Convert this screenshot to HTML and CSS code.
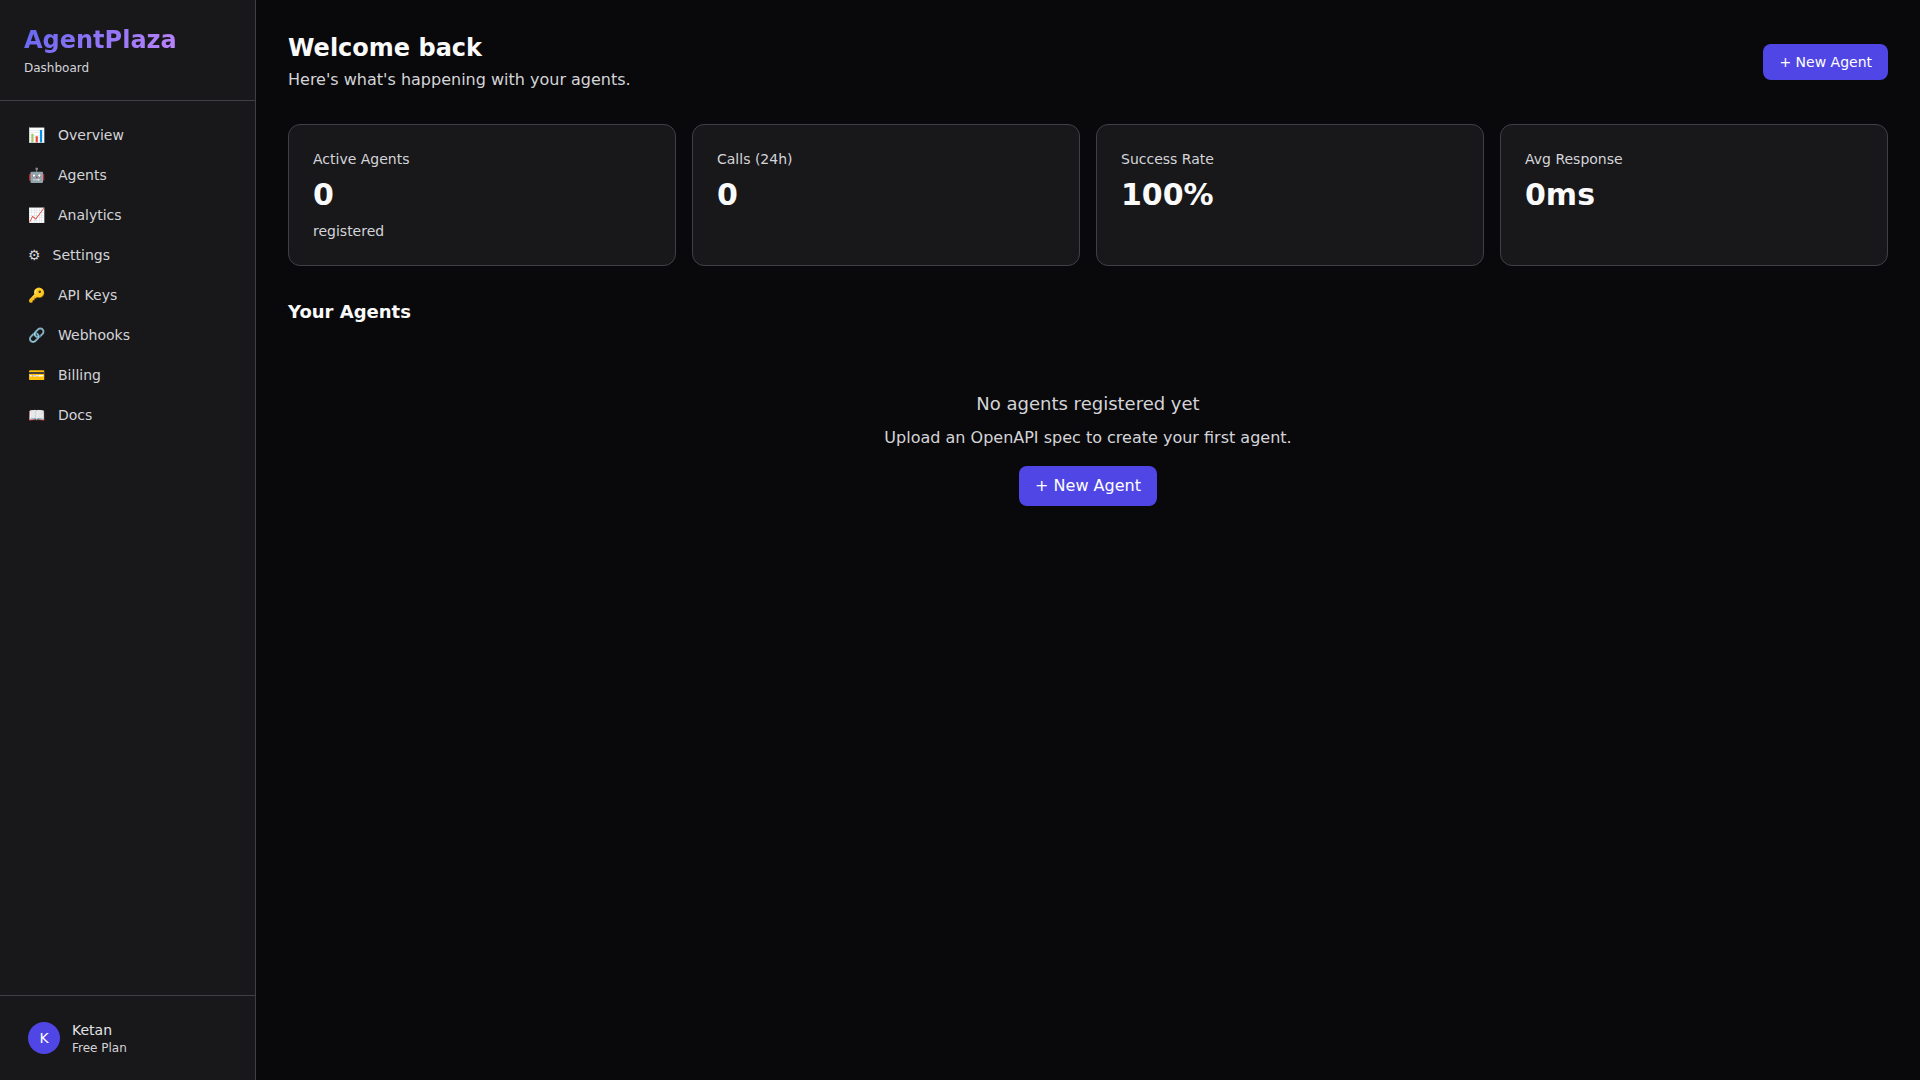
FILE: index.html
```html
<!DOCTYPE html>
<html lang="en">
<head>
    <meta charset="UTF-8">
    <title>AgentPlaza Dashboard</title>
    <link rel="stylesheet" href="styles.css">
</head>
<body>
    <div class="layout">
        <aside class="sidebar">
            <div class="brand">
                <div class="logo">AgentPlaza</div>
                <div class="brand-sub">Dashboard</div>
            </div>
            <nav class="nav">
                <a class="nav-link"><span>📊</span> <span>Overview</span></a>
                <a class="nav-link"><span>🤖</span> <span>Agents</span></a>
                <a class="nav-link"><span>📈</span> <span>Analytics</span></a>
                <a class="nav-link nav-link-glyph"><span>⚙</span> <span>Settings</span></a>
                <a class="nav-link"><span>🔑</span> <span>API Keys</span></a>
                <a class="nav-link"><span>🔗</span> <span>Webhooks</span></a>
                <a class="nav-link"><span>💳</span> <span>Billing</span></a>
                <a class="nav-link"><span>📖</span> <span>Docs</span></a>
            </nav>
            <div class="user">
                <div class="avatar">K</div>
                <div>
                    <div class="user-name">Ketan</div>
                    <div class="user-plan">Free Plan</div>
                </div>
            </div>
        </aside>

        <main class="main">
            <div class="page-header">
                <div>
                    <h1>Welcome back</h1>
                    <p>Here's what's happening with your agents.</p>
                </div>
                <button class="btn">+ New Agent</button>
            </div>

            <div class="stats">
                <div class="card">
                    <div class="card-label">Active Agents</div>
                    <div class="card-value">0</div>
                    <div class="card-note">registered</div>
                </div>
                <div class="card">
                    <div class="card-label">Calls (24h)</div>
                    <div class="card-value">0</div>
                </div>
                <div class="card">
                    <div class="card-label">Success Rate</div>
                    <div class="card-value">100%</div>
                </div>
                <div class="card">
                    <div class="card-label">Avg Response</div>
                    <div class="card-value">0ms</div>
                </div>
            </div>

            <h2>Your Agents</h2>

            <div class="empty">
                <div class="empty-title">No agents registered yet</div>
                <p>Upload an OpenAPI spec to create your first agent.</p>
                <button class="btn btn-large">+ New Agent</button>
            </div>
        </main>
    </div>
</body>
</html>
```

FILE: styles.css
```css
* {
    box-sizing: border-box;
    margin: 0;
    padding: 0;
}
body {
    font-family: "DejaVu Sans", sans-serif;
    background: #09090b;
    color: #e4e4e7;
}
.layout {
    display: flex;
    min-height: 100vh;
}
.sidebar {
    width: 256px;
    flex-shrink: 0;
    display: flex;
    flex-direction: column;
    background: #18181b;
    border-right: 1px solid #3f3f46;
}
.brand {
    padding: 24px;
    border-bottom: 1px solid #3f3f46;
}
.logo {
    font-size: 24px;
    font-weight: 700;
    line-height: 32px;
    width: fit-content;
    background: linear-gradient(135deg, #6366f1, #c084fc);
    -webkit-background-clip: text;
    background-clip: text;
    color: transparent;
}
.brand-sub {
    font-size: 12px;
    line-height: 16px;
    margin-top: 4px;
    color: #d4d4d8;
}
.nav {
    flex: 1;
    padding: 16px;
    display: flex;
    flex-direction: column;
    gap: 5px;
}
.nav-link {
    display: flex;
    align-items: center;
    gap: 13px;
    height: 35px;
    padding: 0 12px;
    font-size: 14px;
    color: #d4d4d8;
}
.nav-link-glyph {
    gap: 12px;
}
.user {
    display: flex;
    align-items: center;
    gap: 12px;
    padding: 24px 28px;
    border-top: 1px solid #3f3f46;
}
.avatar {
    width: 32px;
    height: 32px;
    border-radius: 50%;
    background: #4f46e5;
    color: #fff;
    font-size: 14px;
    display: flex;
    align-items: center;
    justify-content: center;
}
.user-name {
    font-size: 14px;
    line-height: 20px;
    color: #e4e4e7;
}
.user-plan {
    font-size: 12px;
    line-height: 16px;
    color: #d4d4d8;
}
.main {
    flex: 1;
    padding: 32px;
}
.page-header {
    display: flex;
    justify-content: space-between;
    align-items: center;
    margin-bottom: 32px;
}
h1 {
    font-size: 24px;
    line-height: 32px;
    font-weight: 700;
    color: #fafafa;
}
.page-header p {
    font-size: 16px;
    line-height: 24px;
    margin-top: 4px;
    color: #d4d4d8;
}
.btn {
    font-family: inherit;
    font-size: 14px;
    line-height: 20px;
    padding: 8px 16px;
    border: none;
    border-radius: 8px;
    background: #4f46e5;
    color: #fff;
}
.btn-large {
    font-size: 16px;
    line-height: 24px;
    margin-top: 16px;
}
.stats {
    display: grid;
    grid-template-columns: repeat(4, 1fr);
    gap: 16px;
    margin-bottom: 32px;
}
.card {
    height: 142px;
    padding: 24px;
    background: #18181b;
    border: 1px solid #3f3f46;
    border-radius: 12px;
}
.card-label {
    font-size: 14px;
    line-height: 21px;
    color: #d4d4d8;
}
.card-value {
    font-size: 30px;
    line-height: 36px;
    font-weight: 700;
    margin: 7px 0 8px;
    color: #fafafa;
}
.card-note {
    font-size: 14px;
    line-height: 21px;
    color: #d4d4d8;
}
h2 {
    font-size: 18px;
    line-height: 28px;
    font-weight: 700;
    color: #fafafa;
}
.empty {
    padding-top: 64px;
    text-align: center;
}
.empty-title {
    font-size: 18px;
    line-height: 28px;
    color: #d4d4d8;
}
.empty p {
    font-size: 16px;
    line-height: 24px;
    margin-top: 8px;
    color: #d4d4d8;
}
```
